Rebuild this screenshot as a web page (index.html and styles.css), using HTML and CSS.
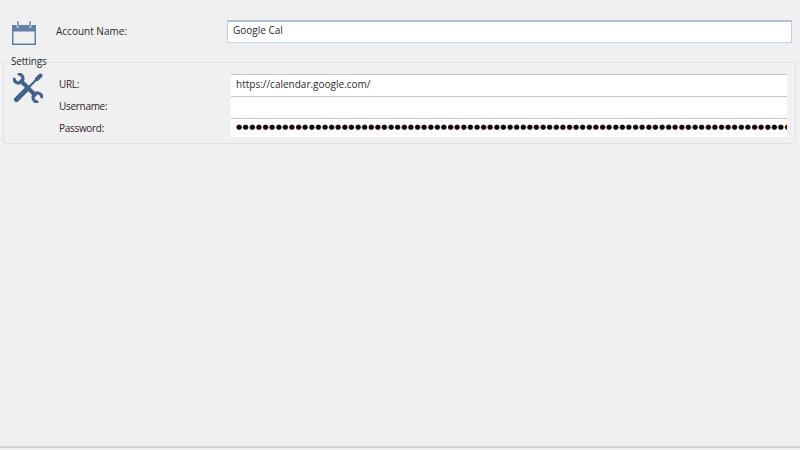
FILE: index.html
```html
<!DOCTYPE html>
<html lang="en">
<head>
<meta charset="utf-8">
<title>Account</title>
<link rel="stylesheet" href="styles.css">
</head>
<body>
<main class="page">
  <section class="account-row">
    <svg class="cal-icon" width="24" height="24" viewBox="0 0 24 24">
      <path fill="#637fa8" d="M0 4h4.500v2.500h2.500V4h10v2.500h2.500V4H24v20H0z"/>
      <rect x="5.200" y="0" width="1.400" height="6" rx=".7" fill="#637fa8"/>
      <rect x="17.400" y="0" width="1.400" height="6" rx=".7" fill="#637fa8"/>
      <rect x="1.500" y="10.500" width="21" height="12" fill="#f0f0f0"/>
    </svg>
    <label class="account-label">Account Name:</label>
    <div class="account-input">Google Cal</div>
  </section>
  <fieldset class="settings">
    <legend class="settings-title">Settings</legend>
    <svg class="tools-icon" width="30" height="30" viewBox="0 0 30 30">
      <g fill="none" stroke="#40618f">
        <path stroke-width="4" d="M7 7 23 23"/>
        <path stroke-width="3.200" d="M4.700 1.100A4.500 4.500 0 1 1 1.100 4.700"/>
        <path stroke-width="3.200" d="M25.300 28.900A4.500 4.500 0 1 1 28.900 25.300"/>
        <path stroke-width="5" stroke-linecap="round" d="M3.500 26.500 13 17"/>
        <path stroke-width="2.200" d="M13 17 24 6"/>
        <path stroke-width="4" stroke-linecap="round" d="M24 6 27.500 2.500"/>
      </g>
    </svg>
    <div class="fields">
      <div class="field">
        <label class="field-label">URL:</label>
        <div class="field-input">https://calendar.google.com/</div>
      </div>
      <div class="field">
        <label class="field-label">Username:</label>
        <div class="field-input"></div>
      </div>
      <div class="field">
        <label class="field-label">Password:</label>
        <div class="field-input dots">●●●●●●●●●●●●●●●●●●●●●●●●●●●●●●●●●●●●●●●●●●●●●●●●●●●●●●●●●●●●●●●●●●●●●●●●●●●●●●●●●●●●●●●●</div>
      </div>
    </div>
  </fieldset>
  <div class="spacer"></div>
  <div class="bottom-rule"></div>
</main>
</body>
</html>
```
FILE: styles.css
```css
* { box-sizing: border-box; }
html, body { margin: 0; height: 100%; overflow: hidden; }
body {
  background: #f0f0f0;
  color: #2b2b2b;
  font-family: "Open Sans", "Noto Sans", sans-serif;
  font-size: 10px;
  line-height: 14px;
}
.page { height: 450px; display: flex; flex-direction: column; }
.account-row {
  display: flex;
  align-items: center;
  height: 23px;
  margin: 20px 8px 0 12px;
}
.cal-icon { flex: none; margin-top: 3px; }
.account-label { width: 171px; margin-left: 20px; margin-top: -2px; flex: none; }
.account-input {
  flex: 1;
  height: 23px;
  padding: 2px 5px;
  background: #fff;
  border: 1px solid #b9d3e8;
  border-top: 2px solid #a9c3da;
  line-height: 13px;
}
.settings {
  position: relative;
  margin: 19px 4px 0 3px;
  padding: 0 8px 0 9px;
  height: 82px;
  border: 1px solid #e0e0e0;
  border-radius: 3px;
  display: flex;
  min-width: 0;
}
.settings-title {
  position: absolute;
  top: -8px;
  left: 6px;
  padding: 0 1px;
  background: #f0f0f0;
  line-height: 13px;
  letter-spacing: -0.2px;
}
.tools-icon { flex: none; margin-top: 10px; }
.fields {
  flex: 1;
  min-width: 0;
  margin-left: 16px;
  padding-top: 11px;
  display: flex;
  flex-direction: column;
}
.field { display: flex; align-items: flex-start; height: 22px; }
.field-label {
  width: 172px;
  flex: none;
  padding-top: 3px;
  color: #33222e;
  letter-spacing: -0.3px;
}
.field-input {
  flex: 1;
  min-width: 0;
  height: 22px;
  padding: 2px 5px;
  background: #fff;
  border-top: 1px solid #c4c6cb;
  overflow: hidden;
  white-space: nowrap;
}
.dots {
  height: 19px;
  font-family: "DejaVu Sans", sans-serif;
  font-size: 7px;
  letter-spacing: 0.5px;
  color: #0b0308;
  line-height: 15px;
  padding: 1px 0 0 5px;
}
.spacer { flex: 1; }
.bottom-rule { height: 2px; margin-bottom: 2px; background: #d4d4d4; }
```
